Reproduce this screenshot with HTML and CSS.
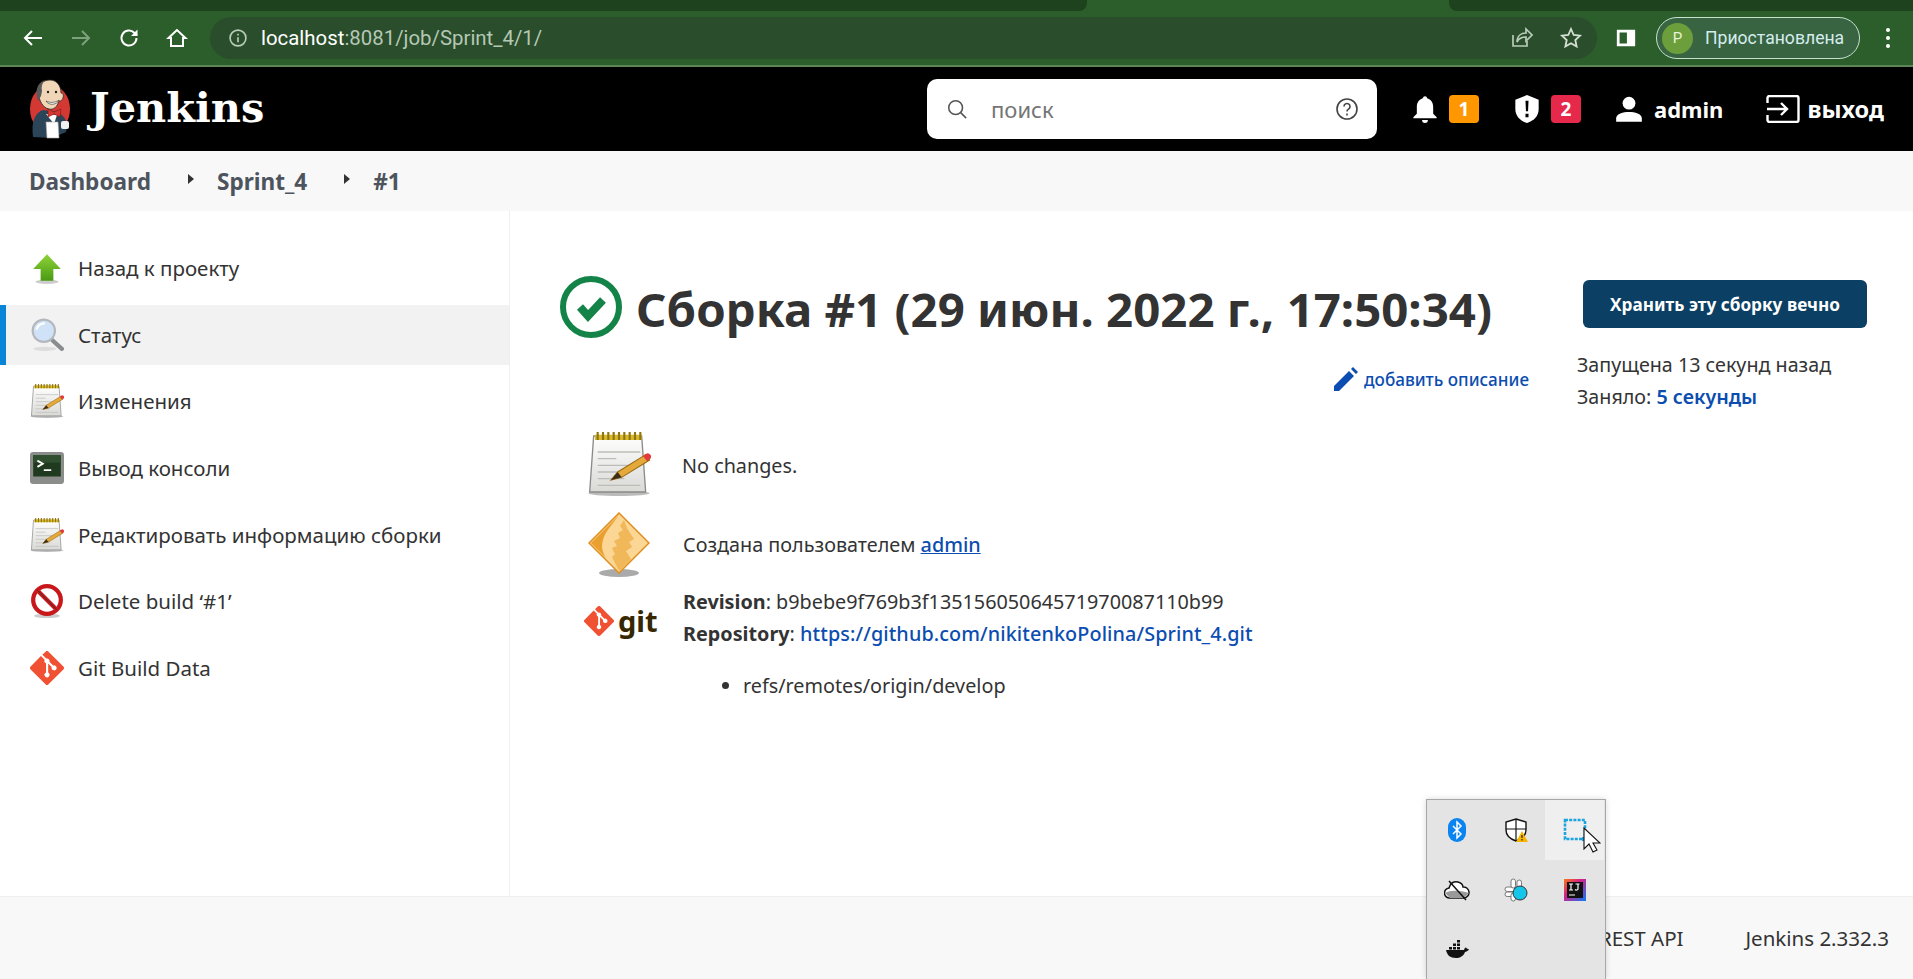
FILE: index.html
```html
<!DOCTYPE html>
<html lang="en">
<head>
  <meta charset="UTF-8" />
  <title>Sprint_4 #1 - Jenkins</title>
  <meta name="viewport" content="width=device-width, initial-scale=1.0"/>
  <link rel="stylesheet" href="styles.css">
</head>
<body>

<svg class="defs" width="0" height="0">
  <defs>
    <linearGradient id="page" x1="0" y1="0" x2="0" y2="1"><stop offset="0" stop-color="#fff"/><stop offset="1" stop-color="#d9d9d6"/></linearGradient>
    <linearGradient id="arrow" x1="0" y1="0" x2="0" y2="1"><stop offset="0" stop-color="#8fd33a"/><stop offset="1" stop-color="#4a9a12"/></linearGradient>
    <symbol id="notepad" viewBox="0 0 48 48">
      <ellipse cx="24" cy="46" rx="23" ry="2" fill="#bbb"/>
      <path d="M5 3h36l3 42H2z" fill="url(#page)" stroke="#8a8a88"/>
      <path d="M8 15h32M8 20h14M8 25h32M8 30h16M8 35h20M8 40h32" stroke="#bdbdb8" stroke-width="1"/>
      <path d="M6 2h35v4H6z" fill="#d8b92c"/>
      <path d="M8 0v6M12 0v6M16 0v6M20 0v6M24 0v6M28 0v6M32 0v6M36 0v6M40 0v6" stroke="#8f7510" stroke-width="1.6"/>
      <path d="M18 36l5-6 21-13 3 4-21 13z" fill="#e5a93a" stroke="#9b6a15" stroke-width=".8"/>
      <path d="M18 36l5-6 3 4z" fill="#3a2d1a"/>
      <path d="M42 18l2-1.5a2 2 0 0 1 3 4l-2 1.5z" fill="#e23b3b"/>
    </symbol>
    <symbol id="gitmark" viewBox="0 0 32 32">
      <path d="M31.4 14.6 17.4.6a2 2 0 0 0-2.8 0l-2.9 2.9 3.6 3.6a2.4 2.4 0 0 1 3 3l3.5 3.5a2.4 2.4 0 1 1-1.4 1.4l-3.3-3.3v8.6a2.4 2.4 0 1 1-2-.1v-8.7a2.4 2.4 0 0 1-1.3-3.2l-3.5-3.6L.6 14.6a2 2 0 0 0 0 2.8l14 14a2 2 0 0 0 2.8 0l14-14a2 2 0 0 0 0-2.8z" fill="#f05133"/>
    </symbol>
  </defs>
</svg>

<div class="tabstrip">
  <div class="tab-dark tab-left"></div>
  <div class="tab-active"></div>
  <div class="tab-dark tab-right"></div>
</div>

<div class="toolbar">
  <svg class="tool" viewBox="0 0 24 24" fill="none" stroke="#fff" stroke-width="2"><path d="M21 12H4M11 5l-7 7 7 7"/></svg>
  <svg class="tool" viewBox="0 0 24 24" fill="none" stroke="#7fa07f" stroke-width="2"><path d="M3 12h17M13 5l7 7-7 7"/></svg>
  <svg class="tool" viewBox="0 0 24 24" fill="none" stroke="#fff" stroke-width="2"><path d="M19.5 12a7.5 7.5 0 1 1-2.2-5.3L20 9.4"/><path d="M20.5 3.5v6.5H14" fill="#fff" stroke="none"/></svg>
  <svg class="tool" viewBox="0 0 24 24" fill="none" stroke="#fff" stroke-width="2"><path d="M12 4 3.5 12H6v8h12v-8h2.5z"/></svg>
  <div class="omnibox">
    <svg class="omni-info" viewBox="0 0 24 24" fill="none" stroke="#b9cbb9" stroke-width="2"><circle cx="12" cy="12" r="9.5"/><path d="M12 11v6M12 7v2"/></svg>
    <span class="url"><b>localhost</b>:8081/job/Sprint_4/1/</span>
    <svg class="omni-act share" viewBox="0 0 24 24" fill="none" stroke="#b9cbb9" stroke-width="1.7"><path d="M4 9v11h14v-5"/><path d="M8 16c0-6 4-9 9-9V3l6 6-6 6v-4c-4 0-7 1-9 5z"/></svg>
    <svg class="omni-act star" viewBox="0 0 24 24" fill="none" stroke="#d5e0d5" stroke-width="1.8"><path d="m12 3 2.7 6 6.3.7-4.7 4.3 1.3 6.5-5.6-3.3-5.6 3.3 1.3-6.5L3 9.700l6.300-.7z"/></svg>
  </div>
  <svg class="sidepanel" viewBox="0 0 24 24"><path d="M2 3h20v18H2z" fill="#fff"/><path d="M5 6h8v12H5z" fill="#2b5e2b"/></svg>
  <div class="profile">
    <span class="avatar">P</span>
    <span class="profile-name">Приостановлена</span>
  </div>
  <svg class="dots" viewBox="0 0 6 22" fill="#fff"><circle cx="3" cy="3" r="2"/><circle cx="3" cy="11" r="2"/><circle cx="3" cy="19" r="2"/></svg>
</div>

<header class="header">
  <div class="brand">
    <svg class="butler" viewBox="0 0 44 60">
      <ellipse cx="21" cy="30" rx="20" ry="24" fill="#d33833"/>
      <path d="M4 58c-2-16 2-24 10-27l14 2c7 3 10 9 10 14l-1 6-7 3-7 3z" fill="#2c4458"/>
      <path d="M17 35l11 1-3 9z" fill="#fff"/>
      <path d="M19 30l6 3 7-3-1 8-6-3-6 3z" fill="#d33833" stroke="#7a1512" stroke-width=".6"/>
      <path d="M9 13C10 4 15 1 21 1c7 0 11 6 11 13 2 0 3 2 2 5-1 3-3 3-4 3-2 6-5 9-10 8-6-1-10-8-11-17z" fill="#f0d6b7" stroke="#2a2a2a" stroke-width=".8"/>
      <path d="M9 22C6 14 7 4 16 1c-3 3-4 7-3 11l-1 5z" fill="#5a5a5b"/>
      <path d="M17 22c4 2 9 2 13-1-2 5-10 6-13 1z" fill="#fff" stroke="#2a2a2a" stroke-width=".6"/>
      <circle cx="19" cy="13" r="1.200" fill="#222"/><circle cx="27" cy="13" r="1.200" fill="#222"/>
      <path d="M17 43h12l1 16H18z" fill="#fff" stroke="#aaa" stroke-width=".6"/>
      <rect x="32" y="42" width="8" height="8" rx="2" fill="#f0f0f0"/>
    </svg>
    <span class="brand-name">Jenkins</span>
  </div>
  <div class="search">
    <svg class="search-icon" viewBox="0 0 24 24" fill="none" stroke="#555" stroke-width="1.700"><circle cx="10.500" cy="10.500" r="7.500"/><path d="m16 16 6 6"/></svg>
    <span class="search-text">поиск</span>
    <svg class="search-help" viewBox="0 0 24 24" fill="none" stroke="#444" stroke-width="1.600"><circle cx="12" cy="12" r="10"/><path d="M9 9.500a3 3 0 1 1 4.500 2.600c-1 .6-1.500 1.200-1.500 2.400M12 16.500v2"/></svg>
  </div>
  <div class="head-item head-bell">
    <svg class="head-icon" viewBox="0 0 24 24" fill="#fff"><path d="M12 1c1 0 1.700.7 1.800 1.700C17 3.600 19 6.500 19 10v6l3 3v1H2v-1l3-3v-6c0-3.500 2-6.400 5.200-7.300C10.300 1.700 11 1 12 1zM9.500 21.500h5a2.500 2.500 0 0 1-5 0z"/></svg>
    <span class="badge badge-warn">1</span>
  </div>
  <div class="head-item head-shield">
    <svg class="head-icon" viewBox="0 0 24 24"><path d="M12 0 22 4v8c0 6-4 10-10 12C6 22 2 18 2 12V4z" fill="#fff"/><path d="M10.700 5h2.600l-.4 9h-1.800zM10.700 16h2.600v3h-2.600z" fill="#000"/></svg>
    <span class="badge badge-alert">2</span>
  </div>
  <div class="head-item head-user">
    <svg class="head-icon" viewBox="0 0 24 24" fill="#fff"><circle cx="12" cy="7" r="5.500"/><path d="M1 23v-3c0-4 6-5.500 11-5.500S23 16 23 20v3z"/></svg>
    <span class="head-label">admin</span>
  </div>
  <div class="head-item head-logout">
    <svg class="logout-icon" viewBox="0 0 34 28" fill="none" stroke="#fff" stroke-width="2.400"><path d="M1.500 8V3a2 2 0 0 1 2-2h27a2 2 0 0 1 2 2v22a2 2 0 0 1-2 2h-27a2 2 0 0 1-2-2v-5"/><path d="M1 14h20M15 8l6 6-6 6"/></svg>
    <span class="head-label">выход</span>
  </div>
</header>

<nav class="crumbs">
  <a class="crumb">Dashboard</a>
  <span class="crumb-arrow"></span>
  <a class="crumb">Sprint_4</a>
  <span class="crumb-arrow"></span>
  <a class="crumb">#1</a>
</nav>

<div class="page">
  <aside class="sidebar">
    <a class="task">
      <span class="task-icon"><svg viewBox="0 0 32 32"><ellipse cx="16" cy="29" rx="11" ry="2" fill="#ccc"/><path d="M16 3 29 17h-7v11H10V17H3z" fill="url(#arrow)"/></svg></span>
      Назад к проекту
    </a>
    <a class="task task-active">
      <span class="task-icon"><svg viewBox="0 0 32 32"><ellipse cx="14" cy="29" rx="11" ry="2" fill="#ddd"/><path d="m20 20 10 9" stroke="#8a8d90" stroke-width="4" stroke-linecap="round"/><circle cx="13" cy="12" r="10.500" fill="#cfe2f7" stroke="#b4b8bc" stroke-width="2"/><path d="M6 11c1-4 4-6 8-6" stroke="#fff" stroke-width="2" fill="none"/></svg></span>
      Статус
    </a>
    <a class="task">
      <span class="task-icon"><svg viewBox="0 0 48 48"><use href="#notepad"/></svg></span>
      Изменения
    </a>
    <a class="task">
      <span class="task-icon"><svg viewBox="0 0 32 32"><rect x="0" y="1" width="32" height="30" rx="3" fill="#8b8d8a"/><rect x="3" y="4" width="26" height="20" fill="#1f3a1f"/><path d="M3 4h26v7H3z" fill="#2f4f2f"/><path d="m7 9 5 3-5 3M13 18h7" stroke="#fff" stroke-width="1.800" fill="none"/></svg></span>
      Вывод консоли
    </a>
    <a class="task">
      <span class="task-icon"><svg viewBox="0 0 48 48"><use href="#notepad"/></svg></span>
      Редактировать информацию сборки
    </a>
    <a class="task">
      <span class="task-icon"><svg viewBox="0 0 32 32"><ellipse cx="16" cy="30" rx="12" ry="2" fill="#ccc"/><circle cx="16" cy="15" r="13" fill="#fff" stroke="#c8181c" stroke-width="4"/><path d="m8 7 16 16" stroke="#c8181c" stroke-width="4"/><path d="m7 6 18 18" stroke="#333" stroke-width=".8"/></svg></span>
      Delete build ‘#1’
    </a>
    <a class="task">
      <span class="task-icon"><svg viewBox="0 0 32 32"><use href="#gitmark"/></svg></span>
      Git Build Data
    </a>
  </aside>

  <main class="main">
    <div class="main-left">
      <div class="title-row">
        <svg class="status-icon" viewBox="0 0 62 62"><circle cx="31" cy="31" r="28" fill="none" stroke="#138347" stroke-width="6"/><path d="m20 31 8 9 15-16" fill="none" stroke="#138347" stroke-width="8"/></svg>
        <h1 class="title">Сборка #1 (29 июн. 2022 г., 17:50:34)</h1>
      </div>
      <div class="desc-row">
        <svg class="desc-icon" viewBox="0 0 24 24" fill="#0b4db0"><path d="M0 24v-5L15 4l5 5L5 24zM17 2l2-2 5 5-2 2z"/></svg>
        <a class="desc-link">добавить описание</a>
      </div>
      <div class="info-row info-changes">
        <svg class="info-icon" viewBox="0 0 48 48"><use href="#notepad"/></svg>
        <div class="info-text">No changes.</div>
      </div>
      <div class="info-row info-user">
        <svg class="info-icon diamond" viewBox="0 0 62 66">
          <ellipse cx="31" cy="61" rx="20" ry="4" fill="#aaa"/>
          <path d="M31 1 61 31 31 61 1 31z" fill="#fbd694" stroke="#e08d1e" stroke-width="1.500"/>
          <path d="M31 3 3 31l15 15c-4-6-5-12-3-18 2-8 8-14 16-25z" fill="#e9a02e"/>
          <path d="M36 8 32 14l3 4-5 3 2 5-6 3 3 5-5 2 3 6-3 3 7 14c4-2 8-7 12-12l-5-8 6-4-3-5 5-3-4-6-3-5z" fill="#f1b85a"/>
        </svg>
        <div class="info-text">Создана пользователем <a class="link-under">admin</a></div>
      </div>
      <div class="info-row info-git">
        <div class="git-logo">
          <svg class="git-mark" viewBox="0 0 32 32"><use href="#gitmark"/></svg>
          <span class="git-word">git</span>
        </div>
        <div class="info-text">
          <div class="git-line"><b>Revision</b>: b9bebe9f769b3f13515605064571970087110b99</div>
          <div class="git-line"><b>Repository</b>: <a class="link">https://github.com/nikitenkoPolina/Sprint_4.git</a></div>
          <ul class="refs"><li>refs/remotes/origin/develop</li></ul>
        </div>
      </div>
    </div>
    <div class="main-side">
      <button class="keep">Хранить эту сборку вечно</button>
      <div class="side-line">Запущена 13 секунд назад</div>
      <div class="side-line">Заняло: <a class="link strong">5 секунды</a></div>
    </div>
  </main>
</div>

<footer class="footer">
  <span>REST API</span>
  <span>Jenkins 2.332.3</span>
</footer>

<div class="tray">
  <div class="tray-cell">
    <svg class="tray-icon" viewBox="0 0 24 24"><rect x="3" y="0" width="18" height="24" rx="9" fill="#0a84f0"/><path d="m8 8 8 8-4 4V4l4 4-8 8" fill="none" stroke="#fff" stroke-width="1.500"/></svg>
  </div>
  <div class="tray-cell">
    <svg class="tray-icon" viewBox="0 0 24 24"><path d="M12 1 22 4v8c0 5-4 9-10 11C6 21 2 17 2 12V4z" fill="#fff" stroke="#111" stroke-width="1.400"/><path d="M12 1v22M2 11h20" stroke="#111" stroke-width="1.200"/><path d="m18 13 6 11H12z" fill="#f7b500"/><path d="M18 17v3M18 21v1.500" stroke="#111" stroke-width="1.100"/></svg>
  </div>
  <div class="tray-cell tray-hover">
    <svg class="tray-icon" viewBox="0 0 24 24"><path d="M2 2h20v19H2z" fill="none" stroke="#1da4e0" stroke-width="2.600" stroke-dasharray="3 1.200"/><path d="M19 19h5v4h-5z" fill="#1da4e0"/></svg>
    <svg class="cursor" viewBox="0 0 18 26"><path d="M1 1v21l5-5 4 8 4-2-4-7h7z" fill="#fff" stroke="#111" stroke-width="1.100"/></svg>
  </div>
  <div class="tray-cell">
    <svg class="tray-icon wide" viewBox="0 0 26 22"><path d="M6 19a5 5 0 0 1-1-10c1-5 5-7 9-6 3 1 5 3 5 5a5.500 5.500 0 0 1 1 11z" fill="#fff" stroke="#111" stroke-width="1.500"/><path d="M1 14c5-3 14-3 24 0l-5 5H6z" fill="#999"/><path d="m5 2 17 19" stroke="#111" stroke-width="1.500"/></svg>
  </div>
  <div class="tray-cell">
    <svg class="tray-icon" viewBox="0 0 24 24"><g fill="#fff" stroke="#777" stroke-width="1"><rect x="1" y="9" width="10" height="4.500" rx="2.200"/><rect x="7" y="1" width="4.500" height="9" rx="2.200"/><rect x="13" y="2" width="4.500" height="9" rx="2.200"/><rect x="1" y="14" width="10" height="4.500" rx="2.200"/><rect x="7" y="15" width="4.500" height="8" rx="2.200"/></g><circle cx="16" cy="15" r="7" fill="#16c5ea" stroke="#333" stroke-width="1"/></svg>
  </div>
  <div class="tray-cell">
    <svg class="tray-icon" viewBox="0 0 24 24"><defs><linearGradient id="ij" x1="0" y1="0" x2="1" y2="1"><stop offset="0" stop-color="#f97a12"/><stop offset=".4" stop-color="#d61f86"/><stop offset="1" stop-color="#087cfa"/></linearGradient></defs><rect x="1" y="1" width="22" height="22" fill="url(#ij)"/><rect x="4" y="4" width="16" height="16" fill="#111"/><path d="M6 6h4M8 6v6M6 12h4M12.500 6h4M15 6v5c0 1-2 1.500-3 .5M6 17h6" stroke="#fff" stroke-width="1.200" fill="none"/></svg>
  </div>
  <div class="tray-cell">
    <svg class="tray-icon" viewBox="0 0 24 24" fill="#111"><path d="M1 12h18c.5-2 1.500-2.500 2-2.500.5 1 2 1.500 3 1.500-1 2.500-3 2.500-4 3-1.500 4-5 6-9 6-6 0-9-3-10-8z"/><path d="M4 9h3v2.500H4zM8 9h3v2.500H8zM12 9h3v2.500h-3zM8 5.500h3V8H8zM12 5.500h3V8h-3zM12 2h3v2.500h-3z"/></svg>
  </div>
</div>

</body>
</html>
```

FILE: styles.css
```css
html, body { margin: 0; padding: 0; }
body { width: 1913px; height: 979px; overflow: hidden; display: flex; flex-direction: column; background: #fff; color: #333; font-family: "Noto Sans", "Open Sans", sans-serif; position: relative; }
a { color: inherit; }
svg { display: block; flex: none; }
.defs { position: absolute; }

/* browser chrome */
.tabstrip { height: 11px; display: flex; background: #2b5e2b; }
.tab-dark { background: #1d421d; }
.tab-left { width: 1087px; border-bottom-right-radius: 8px; }
.tab-active { width: 362px; }
.tab-right { flex: 1; border-bottom-left-radius: 8px; }
.toolbar { height: 54px; background: #2b5e2b; border-bottom: 2px solid #5c8658; display: flex; align-items: center; padding-left: 21px; }
.tool { width: 24px; height: 24px; margin-right: 24px; }
.omnibox { width: 1387px; height: 42px; margin-left: -3px; background: #2a4d2b; border-radius: 21px; display: flex; align-items: center; padding-left: 18px; box-sizing: border-box; }
.omni-info { width: 20px; height: 20px; }
.url { margin-left: 13px; font: 20.400px "Roboto", sans-serif; color: #b5c8b5; flex: 1; }
.url b { font-weight: 400; color: #fff; }
.omni-act { width: 24px; height: 24px; margin-right: 24px; }
.omni-act.share { margin-right: 26px; }
.omni-act.star { margin-right: 14px; }
.sidepanel { width: 22px; height: 24px; margin-left: 18px; }
.profile { width: 204px; height: 42px; margin-left: 19px; box-sizing: border-box; border: 1.500px solid #c8e0d0; border-radius: 21px; background: #386441; display: flex; align-items: center; padding-left: 5px; }
.avatar { width: 31px; height: 31px; border-radius: 50%; background: #6c9f3b; color: #e8f3dc; font: 15px "Roboto", sans-serif; display: flex; align-items: center; justify-content: center; }
.profile-name { margin-left: 12px; font: 17.600px "Roboto", sans-serif; color: #d6ecee; white-space: nowrap; }
.dots { width: 6px; height: 22px; margin-left: 25px; }

/* jenkins header */
.header { height: 84px; background: #000; display: flex; align-items: center; color: #fff; padding-left: 29px; }
.brand { display: flex; align-items: center; width: 898px; }
.butler { width: 44px; height: 60px; }
.brand-name { margin: -4px 0 0 17px; font: bold 41.500px "DejaVu Serif", serif; }
.search { width: 450px; height: 60px; background: #fff; border-radius: 10px; display: flex; align-items: center; padding: 0 18px 0 19px; box-sizing: border-box; }
.search-icon { width: 22px; height: 22px; }
.search-text { margin-left: 23px; flex: 1; font-size: 22px; color: #757575; }
.search-help { width: 24px; height: 24px; }
.head-item { display: flex; align-items: center; }
.head-icon { width: 28px; height: 30px; }
.head-bell { margin-left: 34px; }
.head-shield { margin-left: 34px; }
.head-user { margin-left: 34px; }
.head-logout { margin-left: 43px; }
.badge { width: 30px; height: 28px; margin-left: 10px; border-radius: 4px; display: flex; align-items: center; justify-content: center; font-size: 19px; font-weight: 700; }
.badge-warn { background: #ff9800; }
.badge-alert { background: #e6294b; }
.head-label { margin-left: 11px; font-size: 22px; font-weight: 700; }
.logout-icon { width: 34px; height: 28px; }
.head-logout .head-label { margin-left: 7px; font-size: 23.500px; }

/* breadcrumbs */
.crumbs { height: 60px; background: #f8f8f8; display: flex; align-items: center; padding-left: 29px; font-size: 22.600px; font-weight: 700; color: #4d545d; }
.crumb-arrow { width: 0; height: 0; margin: 0 23px 0 37px; border-left: 6px solid #333; border-top: 5px solid transparent; border-bottom: 5px solid transparent; position: relative; top: -2px; }

/* page */
.page { flex: 1; display: flex; min-height: 0; }
.sidebar { width: 509px; border-right: 1px solid #efefef; padding-top: 27px; display: flex; flex-direction: column; gap: 6px; }
.task { height: 60.600px; display: flex; align-items: center; font-size: 20.500px; color: #333; padding-left: 30px; white-space: nowrap; }
.task-active { background: #f2f2f2; box-shadow: inset 6px 0 0 #0a84d6; }
.task-icon { width: 34px; height: 34px; margin-right: 14px; display: block; }
.task-icon svg { width: 34px; height: 34px; }
.main { flex: 1; display: flex; padding-left: 50px; }
.main-left { width: 969px; }
.title-row { display: flex; align-items: center; margin-top: 65px; height: 62px; }
.status-icon { width: 62px; height: 62px; }
.title { margin: 4px 0 0 14px; font-size: 47.400px; font-weight: 700; line-height: 62px; color: #333; white-space: nowrap; }
.desc-row { display: flex; justify-content: flex-end; align-items: center; margin-top: 28px; height: 26px; }
.desc-icon { width: 24px; height: 24px; margin-right: 6px; }
.desc-link { font-size: 17.100px; font-weight: 500; color: #0b4db0; }
.info-row { display: flex; align-items: center; margin-left: 28px; }
.info-icon { width: 64px; height: 64px; margin-right: -2px; margin-left: -1px; margin-top: -4px; }
.info-icon.diamond { width: 62px; height: 66px; margin: 0; }
.info-text { font-size: 19.800px; margin-left: 33px; line-height: 32px; }
.info-changes { margin-top: 44px; }
.info-user { margin-top: 16px; }
.info-git { margin-top: 8px; align-items: flex-start; }
.git-logo { width: 62px; display: flex; align-items: center; margin-top: 19px; margin-left: -4px; margin-right: 4px; }
.git-mark { width: 30px; height: 30px; }
.git-word { font: bold 29px "Noto Sans", sans-serif; color: #362701; margin-left: 4px; line-height: 32px; }
.git-line b { font-weight: 700; }
.link, .link-under { color: #0b4db0; font-weight: 500; }
.link { text-decoration: none; letter-spacing: 0.1px; }
.link-under { text-decoration: underline; }
.strong { font-weight: 600; letter-spacing: 0; }
.refs { margin: 20px 0 0; padding-left: 60px; }
.main-side { width: 291px; margin-left: 48px; padding-top: 69px; }
.keep { display: block; width: 284px; height: 48px; margin: 0 0 21px 6px; border: 0; border-radius: 6px; background: #0b3f63; color: #fff; font-family: "Noto Sans", sans-serif; font-size: 17.200px; font-weight: 700; }
.side-line { font-size: 19.700px; line-height: 32px; white-space: nowrap; }

/* footer */
.footer { height: 83px; background: #f8f8f8; border-top: 1px solid #eee; box-sizing: border-box; display: flex; justify-content: flex-end; align-items: center; gap: 62px; padding-right: 24px; font-size: 20.500px; color: #333; }

/* windows tray popup over the page */
.tray { position: absolute; left: 1426px; top: 799px; width: 180px; height: 180px; box-sizing: border-box; background: #e4e4e4; border: 1px solid #a6a6a6; border-bottom: 0; display: grid; grid-template-columns: repeat(3, 59px); grid-auto-rows: 60px; box-shadow: 0 0 6px rgba(0,0,0,0.15); }
.tray-cell { display: flex; align-items: center; justify-content: center; position: relative; }
.tray-hover { background: #efefef; }
.tray-icon { width: 24px; height: 24px; }
.tray-icon.wide { width: 26px; height: 22px; }
.cursor { position: absolute; left: 38px; top: 27px; width: 18px; height: 26px; }
```
